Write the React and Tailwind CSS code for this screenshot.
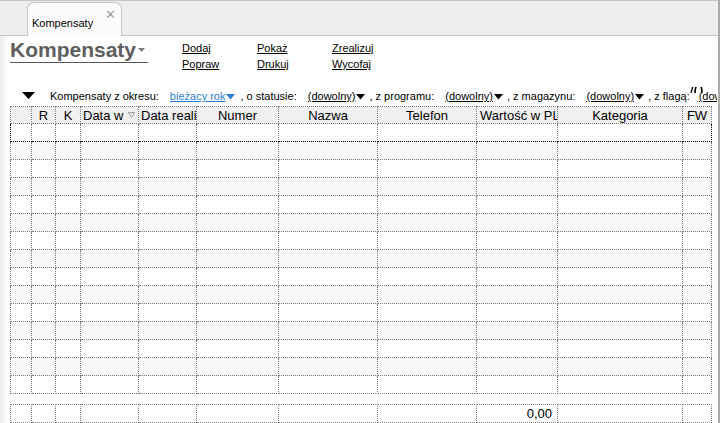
import React from "react";

const cols = [21, 24, 25, 58, 58, 82, 99, 99, 81, 125, 29];

function Tri({ color = "#000", className = "" }) {
  return (
    <svg width="9" height="6" viewBox="0 0 9 6" className={`shrink-0 ${className}`}>
      <path d="M0 0 L9 0 L4.5 5.5 Z" fill={color} />
    </svg>
  );
}

function Cols() {
  return (
    <colgroup>
      {cols.map((w, i) => (
        <col key={i} style={{ width: w }} />
      ))}
    </colgroup>
  );
}

const cell = "border border-dotted border-[#7a7a7a] p-0";

export default function App() {
  const rows = Array.from({ length: 15 }, (_, i) => i);
  return (
    <div className="w-[721px] h-[423px] overflow-hidden bg-white font-['Liberation_Sans',Arial,sans-serif] text-black">
      <div className="w-[720px] h-[423px] border-r-2 border-[#ababab] flex flex-col">
        {/* tab bar */}
        <div className="h-[36px] shrink-0 bg-[#eeeeee] border-t border-b border-[#c6c6c6] flex items-end pl-[27px]">
          <div className="w-[95px] h-[34px] -mb-px bg-[#fbfbfb] border border-b-0 border-[#c6c6c6] rounded-t-[7px] relative">
            <span className="absolute left-[4px] top-[14px] text-[11px] leading-[13px]">Kompensaty</span>
            <span className="absolute left-[77px] top-[5px] text-[13px] leading-[13px] text-[#a0a0a0]">✕</span>
          </div>
        </div>

        {/* content */}
        <div className="flex-1 bg-[linear-gradient(to_right,#ececec_0px,#ffffff_9px)] overflow-hidden">
          {/* header */}
          <div className="flex items-start pl-[10px] h-[51px]">
            <div className="w-[138px] h-[27px] border-b border-[#585858] flex items-end">
              <span className="text-[21px] leading-[25px] font-bold text-[#5e5e5e]">Kompensaty</span>
              <svg width="7" height="4" viewBox="0 0 7 4" className="ml-[2px] mb-[10px] shrink-0">
                <path d="M0 0 L7 0 L3.5 4 Z" fill="#7a7a7a" />
              </svg>
            </div>
            <div className="ml-[34px] pt-[6px] grid grid-cols-[75px_75px_75px] content-start gap-y-[3px] text-[11px] leading-[13px] underline">
              <span>Dodaj</span>
              <span>Pokaż</span>
              <span>Zrealizuj</span>
              <span>Popraw</span>
              <span>Drukuj</span>
              <span>Wycofaj</span>
            </div>
          </div>

          {/* filter row */}
          <div className="h-[16px] flex items-end text-[11px] leading-[13px] whitespace-nowrap overflow-hidden w-[717px]">
            <svg width="13" height="7" viewBox="0 0 13 7" className="ml-[22px] mb-[4px] shrink-0">
              <path d="M0 0 L13 0 L6.5 7 Z" fill="#000" />
            </svg>
            <span className="ml-[15px] shrink-0">Kompensaty z okresu:</span>
            <span className="ml-[11px] shrink-0 text-[#2a7fd6] underline">bieżacy rok</span>
            <Tri color="#2a7fd6" className="ml-[1px] mb-[3px]" />
            <span className="ml-[5px] shrink-0">, o statusie:</span>
            <span className="ml-[11px] shrink-0 underline">(dowolny)</span>
            <Tri className="ml-[1px] mb-[3px]" />
            <span className="ml-[4px] shrink-0">, z programu:</span>
            <span className="ml-[11px] shrink-0 underline">(dowolny)</span>
            <Tri className="ml-[1px] mb-[3px]" />
            <span className="ml-[4px] shrink-0">, z magazynu:</span>
            <span className="ml-[11px] shrink-0 underline">(dowolny)</span>
            <Tri className="ml-[1px] mb-[3px]" />
            <span className="ml-[4px] shrink-0">, z flagą:</span>
            <svg width="14" height="14" viewBox="0 0 14 14" className="mb-[6px] -ml-[1px] shrink-0">
              <path d="M2 10 L4.5 1" stroke="#000" strokeWidth="1.3" fill="none" />
              <path d="M6 10 Q6 2 9.5 2 Q13 2 13 10" stroke="#000" strokeWidth="1.6" fill="none" />
            </svg>
            <span className="-ml-[4px] shrink-0 underline">(dowolny)</span>
          </div>

          {/* grid */}
          <table className="ml-[10px] mt-[3px] table-fixed border-collapse w-[702px] text-[13px] leading-[15px]">
            <Cols />
            <thead>
              <tr className="h-[17px] bg-[#f0f0f0]">
                <th className={cell}></th>
                <th className={`${cell} font-normal text-center`}>R</th>
                <th className={`${cell} font-normal text-center`}>K</th>
                <th className={`${cell} font-normal text-left pl-[2px] whitespace-nowrap overflow-hidden`}>
                  <span className="inline-flex items-center">
                    Data w
                    <svg width="7" height="6" viewBox="0 0 7 6" className="ml-[5px] shrink-0">
                      <path d="M0.5 0.5 L6.5 0.5 L3.5 5.5 Z" fill="none" stroke="#a0a0a0" strokeWidth="1" />
                    </svg>
                  </span>
                </th>
                <th className={`${cell} font-normal text-left pl-[2px] whitespace-nowrap overflow-hidden`}>Data realizacji</th>
                <th className={`${cell} font-normal text-center`}>Numer</th>
                <th className={`${cell} font-normal text-center`}>Nazwa</th>
                <th className={`${cell} font-normal text-center`}>Telefon</th>
                <th className={`${cell} font-normal text-left pl-[3px] whitespace-nowrap overflow-hidden`}>Wartość w PLN</th>
                <th className={`${cell} font-normal text-center`}>Kategoria</th>
                <th className={`${cell} font-normal text-center`}>FW</th>
              </tr>
            </thead>
            <tbody>
              {rows.map((r) => (
                <tr key={r} className={`h-[18px] ${r % 2 === 1 ? "bg-[#f9f9f9]" : "bg-white"}`}>
                  {cols.map((_, c) => (
                    <td
                      key={c}
                      className={
                        r === 0
                          ? `${cell} border-t-black border-b-black ${c === 0 ? "border-l-black" : ""} ${c === cols.length - 1 ? "border-r-black" : ""}`
                          : cell
                      }
                    ></td>
                  ))}
                </tr>
              ))}
            </tbody>
          </table>

          {/* footer */}
          <table className="ml-[10px] mt-[10px] table-fixed border-collapse w-[702px] text-[13px] leading-[15px]">
            <Cols />
            <tbody>
              <tr className="h-[18px]">
                {cols.map((_, c) => (
                  <td key={c} className={`${cell} ${c === 8 ? "text-right pr-[5px]" : ""}`}>
                    {c === 8 ? "0,00" : ""}
                  </td>
                ))}
              </tr>
            </tbody>
          </table>
        </div>
      </div>
    </div>
  );
}
